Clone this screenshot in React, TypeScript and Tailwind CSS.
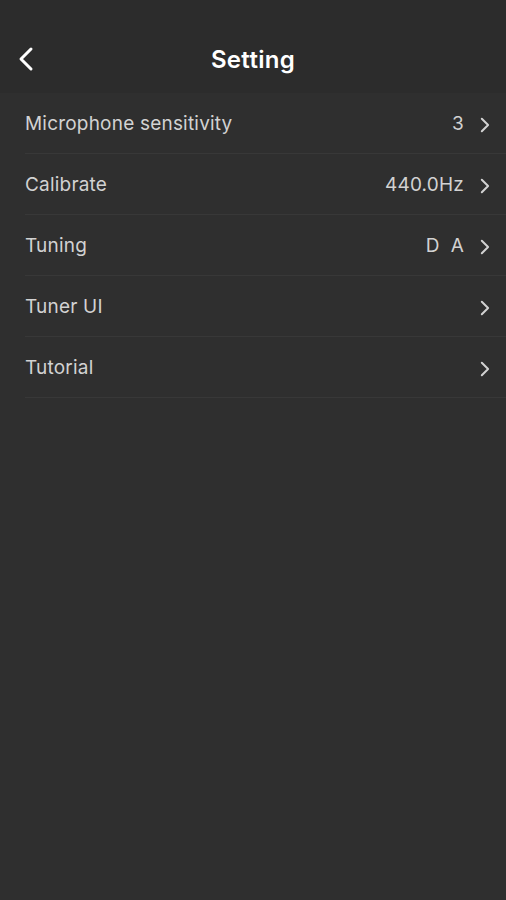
import React from 'react';

type Row = { label: string; value?: string };

const rows: Row[] = [
  { label: 'Microphone sensitivity', value: '3' },
  { label: 'Calibrate', value: '440.0Hz' },
  { label: 'Tuning', value: 'D  A' },
  { label: 'Tuner UI' },
  { label: 'Tutorial' },
];

const Chevron: React.FC<{ className?: string }> = ({ className }) => (
  <svg viewBox="0 0 12 20" className={className} fill="none" stroke="currentColor" strokeWidth={2.2} strokeLinecap="round" strokeLinejoin="round">
    <path d="M3 3l7 7-7 7" />
  </svg>
);

const App: React.FC = () => {
  return (
    <div className="min-h-screen bg-[#2f2f2f] font-['Inter','Liberation_Sans',sans-serif]">
      {/* Header */}
      <header className="relative h-[93px] bg-[#2c2c2c] flex items-center justify-center">
        <button className="absolute left-[18px] top-[46px] text-white">
          <svg viewBox="0 0 16 26" className="w-[16px] h-[26px]" fill="none" stroke="currentColor" strokeWidth={3} strokeLinecap="round" strokeLinejoin="round">
            <path d="M13 3L3 13l10 10" />
          </svg>
        </button>
        <h1 className="mt-[26px] text-[24px] font-semibold text-white tracking-[0.3px]">Setting</h1>
      </header>

      {/* Rows */}
      <ul>
        {rows.map((row) => (
          <li key={row.label} className="ml-[25px] h-[61px] pt-[3px] flex items-center border-b border-[#383838] pr-[16px]">
            <span className="flex-1 text-[19px] tracking-[0.2px] text-[#d2d2d2]">{row.label}</span>
            {row.value && (
              <span className="text-[19px] tracking-[0.2px] text-[#d2d2d2] mr-[15px] whitespace-pre">{row.value}</span>
            )}
            <Chevron className="w-[11px] h-[18px] text-[#d2d2d2]" />
          </li>
        ))}
      </ul>
    </div>
  );
};

export default App;
